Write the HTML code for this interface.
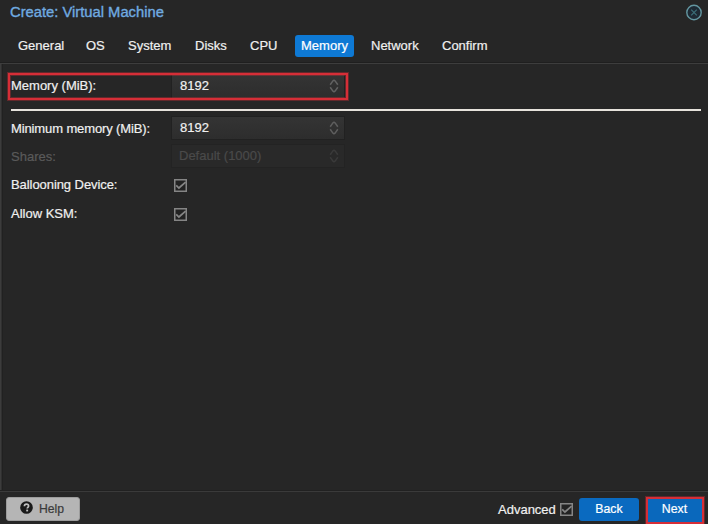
<!DOCTYPE html>
<html><head><meta charset="utf-8">
<style>
*{box-sizing:border-box;margin:0;padding:0}
body{-webkit-text-stroke:0.2px currentColor}
html,body{width:708px;height:524px;overflow:hidden;background:#262626;font-family:"Liberation Sans",sans-serif;color:#f2f2f2}
.abs{position:absolute}
.title{left:10px;top:3px;font-size:14.75px;color:#70abe0;line-height:18px;-webkit-text-stroke:0.35px #70abe0}
.close{left:685px;top:4px;width:18px;height:18px}
.tab{top:35px;height:22px;font-size:13px;line-height:22px;color:#f0f0f0;padding:0 8px;border-radius:3px}
.tab.act{background:#0e79d4;color:#fff;padding:0;text-align:center}
.lbl{font-size:13px;color:#f0f0f0;line-height:16px}
.inp{background:linear-gradient(#343434,#2d2d2d);border:1px solid #212121;height:24px;font-size:13px;line-height:22px;padding-left:8px;color:#f0f0f0}
.red{border:2px solid #d62e37;box-shadow:0 0 0 1px rgba(214,46,55,.35),inset 0 0 0 1px rgba(214,46,55,.35)}
.btn{height:24px;line-height:24px;font-size:13px;text-align:center;border-radius:3px}
.spin{width:12px;height:16px}
.cb{width:13px;height:13px}
</style></head><body>
<div class="abs title">Create: Virtual Machine</div>
<svg class="abs close" viewBox="0 0 18 18"><circle cx="9" cy="8.5" r="7.2" fill="#1e2a34" stroke="#6396a0" stroke-width="1.4"/><path d="M6.2 5.7L11.8 11.3M11.8 5.7L6.2 11.3" stroke="#3b6e78" stroke-width="1.2"/></svg>

<div class="abs tab" style="left:10px">General</div>
<div class="abs tab" style="left:78px">OS</div>
<div class="abs tab" style="left:120px">System</div>
<div class="abs tab" style="left:187px">Disks</div>
<div class="abs tab" style="left:242px">CPU</div>
<div class="abs tab act" style="left:295px;width:59px">Memory</div>
<div class="abs tab" style="left:363px">Network</div>
<div class="abs tab" style="left:434px">Confirm</div>
<div class="abs" style="left:0;top:62px;width:708px;height:1px;background:#1f1f1f"></div>
<div class="abs" style="left:0;top:63px;width:708px;height:1px;background:#3d3d3d"></div>
<!-- left panel border -->
<div class="abs" style="left:0;top:64px;width:1px;height:426px;background:#3c3c3c"></div>
<div class="abs" style="left:1px;top:64px;width:1px;height:426px;background:#303030"></div>
<div class="abs" style="left:2px;top:64px;width:1px;height:426px;background:#212121"></div>

<div class="abs lbl" style="left:11px;top:78px">Memory (MiB):</div>
<div class="abs inp" style="left:171px;top:74px;width:174px;height:25px">8192</div>
<div class="abs red" style="left:8px;top:73px;width:340px;height:27px"></div>

<svg class="abs spin" style="left:328px;top:78px" viewBox="0 0 12 16"><path d="M2.2 6.8L4.9 2.9Q6 1.6 7.1 2.9L9.8 6.8M2.2 9.3L4.9 13.1Q6 14.4 7.1 13.1L9.8 9.3" fill="none" stroke="#626262" stroke-width="1.5"/></svg>

<div class="abs" style="left:11px;top:109px;width:690px;height:2px;background:#e6e2dc"></div>

<div class="abs lbl" style="left:11px;top:121px;letter-spacing:-0.12px">Minimum memory (MiB):</div>
<div class="abs inp" style="left:171px;top:116px;width:174px">8192</div>
<svg class="abs spin" style="left:328px;top:120px" viewBox="0 0 12 16"><path d="M2.2 6.8L4.9 2.9Q6 1.6 7.1 2.9L9.8 6.8M2.2 9.3L4.9 13.1Q6 14.4 7.1 13.1L9.8 9.3" fill="none" stroke="#5e5e5e" stroke-width="1.5"/></svg>

<div class="abs lbl" style="left:11px;top:149px;color:#5a5a5a;text-shadow:none">Shares:</div>
<div class="abs inp" style="left:171px;top:144px;width:174px;color:#4a4a4a;background:#292929;border-color:#232323;padding-left:7px;text-shadow:none">Default (1000)</div>
<svg class="abs spin" style="left:328px;top:148px" viewBox="0 0 12 16"><path d="M2.2 6.8L4.9 2.9Q6 1.6 7.1 2.9L9.8 6.8M2.2 9.3L4.9 13.1Q6 14.4 7.1 13.1L9.8 9.3" fill="none" stroke="#3a3a3a" stroke-width="1.5"/></svg>

<div class="abs lbl" style="left:11px;top:177px;letter-spacing:-0.07px">Ballooning Device:</div>
<svg class="abs cb" style="left:174px;top:179px" viewBox="0 0 13 13"><rect x="0.75" y="0.75" width="11.5" height="11.5" fill="#222" stroke="#858585" stroke-width="1.5"/><path d="M2.2 6.4L4.9 9L11.6 3.2" fill="none" stroke="#858585" stroke-width="1.7"/></svg>
<div class="abs lbl" style="left:11px;top:206px">Allow KSM:</div>
<svg class="abs cb" style="left:174px;top:207.5px" viewBox="0 0 13 13"><rect x="0.75" y="0.75" width="11.5" height="11.5" fill="#222" stroke="#858585" stroke-width="1.5"/><path d="M2.2 6.4L4.9 9L11.6 3.2" fill="none" stroke="#858585" stroke-width="1.7"/></svg>

<div class="abs" style="left:0;top:490px;width:708px;height:1px;background:#212121"></div>
<div class="abs" style="left:0;top:491px;width:708px;height:1px;background:#3a3a3a"></div>

<div class="abs btn" style="left:6px;top:497px;width:74px;height:24px;background:#b5b5b5;border:1px solid #9c9c9c;color:#3a3a3a"></div>
<svg class="abs" style="left:19.5px;top:501.3px;width:13px;height:13px" viewBox="0 0 13 13"><circle cx="6.5" cy="6.5" r="6.3" fill="#1a1a1a"/><path d="M4.4 5.2C4.4 3.9 5.3 3.1 6.5 3.1C7.7 3.1 8.6 3.9 8.6 5C8.6 6.3 7.2 6.4 7.2 7.6" fill="none" stroke="#c0c0c0" stroke-width="1.7"/><rect x="6.2" y="8.6" width="1.9" height="1.8" fill="#c0c0c0"/></svg>
<div class="abs lbl" style="left:39px;top:501px;font-size:12.2px;color:#3a3a3a">Help</div>

<div class="abs lbl" style="left:498px;top:502px">Advanced</div>
<svg class="abs cb" style="left:560px;top:503px" viewBox="0 0 13 13"><rect x="0.75" y="0.75" width="11.5" height="11.5" fill="#222" stroke="#858585" stroke-width="1.5"/><path d="M2.2 6.4L4.9 9L11.6 3.2" fill="none" stroke="#858585" stroke-width="1.7"/></svg>
<div class="abs btn" style="left:579px;top:498px;width:60px;height:23px;line-height:23px;font-size:12.3px;background:#0a6ac0;color:#fff">Back</div>
<div class="abs red" style="left:646px;top:497px;width:58px;height:27px"></div>
<div class="abs btn" style="left:648px;top:499px;width:54px;height:23px;line-height:21px;padding-right:1px;border-radius:0;font-size:12.3px;background:#0a68bc;color:#fff">Next</div>
</body></html>
